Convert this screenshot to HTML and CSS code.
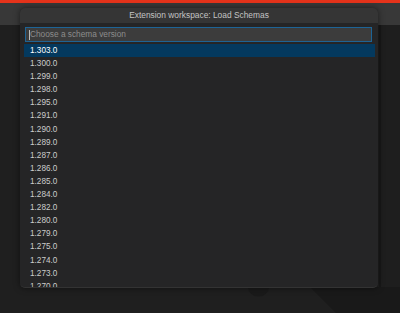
FILE: index.html
```html
<html>
    <head>
        <title>Extension workspace: Load Schemas</title>
        <link rel="stylesheet" href="styles.css">
    </head>

    <body>
        <div class="statusStrip"></div>
        <div class="tabBar"></div>
        <div class="editorArea">
            <svg class="watermark" width="400" height="288" viewBox="0 0 400 288">
                <path d="M248 262 a10 9 0 0 0 21 0 z" fill="#1a1a1a"/>
                <path d="M310 262 L400 262 L400 288 L336 288 z" fill="#191919"/>
            </svg>
        </div>

        <div class="quickPick">
            <div class="quickTitle">Extension workspace: Load Schemas</div>
            <div class="inputRow">
                <div class="quickInput"><span class="caret"></span>Choose a schema version</div>
            </div>
            <div class="quickList" id="list"></div>
        </div>

        <script>
            var versions = ["1.303.0", "1.300.0", "1.299.0", "1.298.0", "1.295.0", "1.291.0",
                "1.290.0", "1.289.0", "1.287.0", "1.286.0", "1.285.0", "1.284.0", "1.282.0",
                "1.280.0", "1.279.0", "1.275.0", "1.274.0", "1.273.0", "1.270.0"];
            var list = document.getElementById("list");
            for (var i = 0; i < versions.length; i++) {
                var row = document.createElement("div");
                row.className = i == 0 ? "quickRow selected" : "quickRow";
                row.innerHTML = versions[i];
                list.appendChild(row);
            }
        </script>
    </body>
</html>
```

FILE: styles.css
```css
body {
    margin: 0;
    background-color: #1e1e1e;
    font-family: "Liberation Sans", Arial, sans-serif;
    height: 313px;
    overflow: hidden;
}

.statusStrip {
    height: 3px;
    background-color: #e5331b;
}

.tabBar {
    height: 22px;
    background-color: #383838;
}

.editorArea {
    height: 288px;
    background-color: #1f1f1f;
    border-right: 2px solid #181818;
    width: 379px;
}

.watermark {
    display: block;
}

.quickPick {
    position: absolute;
    left: 20px;
    top: 8px;
    width: 358px;
    height: 279px;
    background-color: #252526;
    border-radius: 5px;
    box-shadow: 0 0 6px rgba(0, 0, 0, 0.5);
    border-bottom: 1px solid #333;
    overflow: hidden;
    display: flex;
    flex-direction: column;
}

.quickTitle {
    height: 15px;
    line-height: 15px;
    background-color: #353535;
    color: #c4c4c4;
    font-size: 8.4px;
    text-align: center;
}

.inputRow {
    padding: 4px 6px 2px 5px;
}

.quickInput {
    height: 13px;
    line-height: 13px;
    border: 1px solid #1d6496;
    background-color: #3c3c3c;
    color: #8c8c8c;
    font-size: 8.3px;
    padding-left: 3px;
    display: flex;
    align-items: center;
}

.caret {
    width: 1px;
    height: 10px;
    background-color: #bbb;
    margin-right: 0px;
}

.quickList {
    padding: 0 3px 0 4px;
    flex: 1;
    overflow: hidden;
}

.quickRow {
    height: 13.1px;
    line-height: 13.1px;
    padding-left: 6px;
    color: #cccccc;
    font-size: 8.2px;
}

.quickRow.selected {
    background-color: #04395e;
    color: #ffffff;
}
```
